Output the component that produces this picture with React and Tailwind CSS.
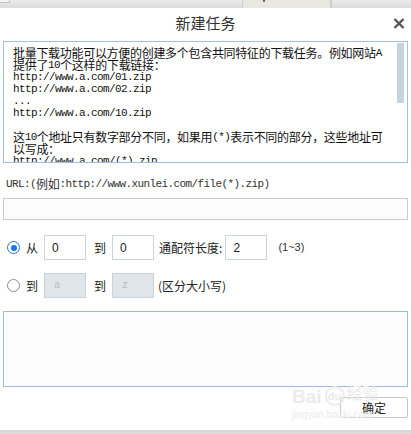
import React from "react";

const asciiCls = "inline-block h-[12px] leading-[12px] align-top font-['Liberation_Mono',monospace] text-[11px] tracking-[-0.6px]";
const cjkCls = "inline-block h-[12px] leading-[12px] align-top font-['Noto_Sans_CJK_SC',sans-serif] text-[12px] tracking-[-0.3px]";

function Mixed({ text }) {
  const runs = [];
  let cur = "";
  let curAscii = null;
  for (const ch of text) {
    const a = ch.charCodeAt(0) < 128;
    if (curAscii === null || a === curAscii) {
      cur += ch;
    } else {
      runs.push([cur, curAscii]);
      cur = ch;
    }
    curAscii = a;
  }
  if (cur) runs.push([cur, curAscii]);
  return (
    <>
      {runs.map(([t, a], i) => (
        <span key={i} className={a ? asciiCls : cjkCls}>
          {t}
        </span>
      ))}
    </>
  );
}

const lines = [
  "批量下载功能可以方便的创建多个包含共同特征的下载任务。例如网站A",
  "提供了10个这样的下载链接：",
  "http://www.a.com/01.zip",
  "http://www.a.com/02.zip",
  "...",
  "http://www.a.com/10.zip",
  "",
  "这10个地址只有数字部分不同，如果用 (*)表示不同的部分，这些地址可",
  "以写成：",
  "http://www.a.com/(*).zip",
];

function Radio({ checked }) {
  return checked ? (
    <div className="w-[13px] h-[13px] rounded-full border-[1.5px] border-[#1b76e4] flex items-center justify-center shrink-0">
      <div className="w-[6px] h-[6px] rounded-full bg-[#1b76e4]" />
    </div>
  ) : (
    <div className="w-[13px] h-[13px] rounded-full border border-[#8c8c8c] bg-white shrink-0" />
  );
}

function Box({ value, disabled }) {
  return disabled ? (
    <div className="w-[42px] h-[25px] border border-[#c9d2da] bg-[#dfe5e9] flex items-center pl-[9px] text-[10px] text-[#b3bcc4] font-['Liberation_Mono',monospace] shrink-0">
      {value}
    </div>
  ) : (
    <div className="w-[42px] h-[25px] border border-[#c9d4de] bg-white flex items-center pl-[7px] text-[12px] text-[#222] font-['Liberation_Sans',sans-serif] shrink-0">
      {value}
    </div>
  );
}

const label = "font-['Noto_Sans_CJK_SC',sans-serif] text-[12px] text-[#222] leading-none shrink-0";

export default function App() {
  return (
    <div className="w-[411px] h-[434px] bg-white relative overflow-hidden flex flex-col font-['Noto_Sans_CJK_SC',sans-serif]">
      {/* top strip */}
      <div className="h-[8px] shrink-0 flex items-start bg-gradient-to-b from-[#ebebeb] to-[#dcdcdc]">
        <div className="w-[10px] h-[3px] bg-[#f6f6f6] border-r border-b border-[#c4c4c4]" />
        <div className="ml-[232px] w-[90px] h-full bg-[#e9e8e0] border-l border-[#d0d0d0] border-r-2 border-r-[#cdcdcd] flex">
          <div className="ml-[20px] w-[2px] h-[2px] bg-[#666]" />
        </div>
      </div>

      {/* title */}
      <div className="h-[28px] shrink-0 flex items-center justify-center relative">
        <span className="text-[15px] text-[#333] leading-none">新建任务</span>
        <svg
          className="absolute right-[6px] top-[10px]"
          width="12"
          height="11"
          viewBox="0 0 12 11"
        >
          <path d="M1.5 1 L10.5 10 M10.5 1 L1.5 10" stroke="#555" strokeWidth="2.4" />
        </svg>
      </div>

      <div className="px-[3px] flex flex-col">
        {/* info textarea */}
        <div className="mt-[5px] h-[122px] border border-[#a6bfdf] bg-white flex overflow-hidden">
          <div className="flex-1 pl-[9px] pt-[5px] text-[#111] whitespace-nowrap overflow-hidden">
            {lines.map((l, i) => (
              <div key={i} className="h-[12px] leading-[12px]">
                <Mixed text={l} />
              </div>
            ))}
          </div>
          <div className="w-[7px] mr-[3px] pt-[1px] shrink-0">
            <div className="h-[60px] bg-[#c5d3de]" />
          </div>
        </div>

        {/* URL label */}
        <div className="mt-[15px] ml-[3px] h-[12px] leading-[12px] whitespace-nowrap text-[#333]">
          <Mixed text="URL:(例如:http://www.xunlei.com/file(*).zip)" />
        </div>

        {/* URL input */}
        <div className="mt-[8px] h-[22px] border border-[#cccccc] bg-[#fcfcfc]" />

        {/* row 1 */}
        <div className="mt-[15px] h-[25px] flex items-center pl-[4px]">
          <Radio checked />
          <span className={label + " ml-[6px]"}>从</span>
          <div className="ml-[6px]">
            <Box value="0" />
          </div>
          <span className={label + " ml-[8px]"}>到</span>
          <div className="ml-[6px]">
            <Box value="0" />
          </div>
          <span className={label + " ml-[5px]"}>通配符长度:</span>
          <div className="ml-[3px]">
            <Box value="2" />
          </div>
          <span className="ml-[11px] text-[11px] text-[#333] font-['Liberation_Sans',sans-serif] leading-none">
            (1~3)
          </span>
        </div>

        {/* row 2 */}
        <div className="mt-[13px] h-[25px] flex items-center pl-[4px]">
          <Radio />
          <span className={label + " ml-[6px]"}>到</span>
          <div className="ml-[6px]">
            <Box value="a" disabled />
          </div>
          <span className={label + " ml-[8px]"}>到</span>
          <div className="ml-[6px]">
            <Box value="z" disabled />
          </div>
          <span className={label + " ml-[4px]"}>(区分大小写)</span>
        </div>

        {/* big textarea */}
        <div className="mt-[13px] h-[76px] border border-[#9fbbe2] bg-[#fcfcfc]" />

        {/* button */}
        <div className="mt-[10px] flex justify-end">
          <div className="w-[68px] h-[21px] border border-[#c9c9c9] rounded-[2px] bg-white flex items-center justify-center text-[12px] text-[#222] leading-none">
            确定
          </div>
        </div>
      </div>

      <div className="flex-1" />
      <div className="h-[4px] shrink-0 bg-gradient-to-b from-[#d4d4d4] to-[#dddddd]" />

      {/* watermark */}
      <div className="absolute left-[292px] top-[384px] pointer-events-none select-none text-[#ebebeb] leading-none">
        <div className="flex items-end">
          <span className="text-[19px] font-bold font-['Liberation_Sans',sans-serif]">Bai</span>
          <span className="ml-[3px] w-[20px] h-[20px] rounded-full border-2 border-[#ebebeb] text-[11px] font-bold flex items-center justify-center font-['Liberation_Sans',sans-serif]">
            du
          </span>
          <span className="ml-[2px] text-[16px] mb-[6px]">经验</span>
        </div>
        <div className="mt-[4px] text-[10px] font-['Liberation_Sans',sans-serif]">jingyan.baidu.com</div>
      </div>
    </div>
  );
}
